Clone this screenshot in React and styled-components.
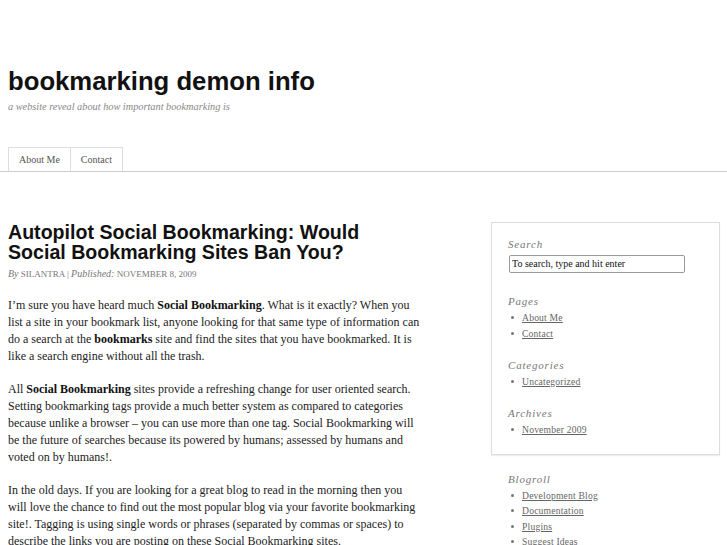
import React from 'react';
import styled, { createGlobalStyle } from 'styled-components';

const GlobalStyle = createGlobalStyle`
	html, body {
		margin: 0;
		padding: 0;
		background: #fff;
	}
	body {
		font-family: "Liberation Serif", "Times New Roman", serif;
		color: #222;
	}
`;

const Header = styled.header`
	padding: 66px 8px 0;
`;

const SiteTitle = styled.h1`
	margin: 0;
	font-family: "Liberation Sans", Arial, sans-serif;
	font-size: 25.7px;
	font-weight: bold;
	line-height: 30px;
	color: #111;
`;

const Tagline = styled.div`
	margin-top: 5px;
	font-size: 10.3px;
	font-style: italic;
	color: #888;
`;

const Nav = styled.nav`
	display: flex;
	margin-top: 35px;
	padding: 0 8px;
	border-bottom: 1px solid #ccc;
`;

const Tab = styled.a`
	display: block;
	height: 23px;
	padding: 0 10px;
	border: 1px solid #ddd;
	border-bottom: none;
	border-left-width: ${({ first }) => (first ? '1px' : '0')};
	font-size: 10px;
	line-height: 24px;
	color: #555;
	text-decoration: none;
`;

const Layout = styled.div`
	display: flex;
	align-items: flex-start;
	padding: 50px 8px 0;
	gap: 71px;
`;

const Content = styled.main`
	width: 412px;
	flex-shrink: 0;
`;

const PostTitle = styled.h2`
	margin: 0;
	font-family: "Liberation Sans", Arial, sans-serif;
	font-size: 19.6px;
	font-weight: bold;
	line-height: 20px;
	color: #111;
`;

const Meta = styled.div`
	margin-top: 6px;
	font-size: 9px;
	color: #777;
	em {
		font-style: italic;
		font-size: 10px;
	}
`;

const Body = styled.div`
	margin-top: 18px;
	font-size: 12px;
	line-height: 17px;
	color: #222;
	p {
		margin: 0 0 16px;
	}
	strong {
		font-weight: bold;
		color: #111;
	}
`;

const Sidebar = styled.aside`
	width: 229px;
	flex-shrink: 0;
`;

const Box = styled.div`
	border: 1px solid #ddd;
	box-shadow: 0 1px 1px #eee;
	padding: 15px 16px 16px;
`;

const Widget = styled.section`
	margin-bottom: ${({ gap }) => gap || '17px'};
`;

const WidgetTitle = styled.h3`
	margin: 0 0 3px;
	font-size: 11px;
	font-weight: normal;
	font-style: italic;
	letter-spacing: 0.8px;
	color: #777;
`;

const SearchInput = styled.input`
	box-sizing: border-box;
	width: 176px;
	height: 18px;
	margin-left: 1px;
	padding: 0 2px;
	border: 1px solid #999;
	border-radius: 2px;
	font-family: "Liberation Serif", "Times New Roman", serif;
	font-size: 10px;
	color: #111;
	background: #fff;
`;

const List = styled.ul`
	margin: 0;
	padding: 0 0 0 14px;
	list-style: none;
`;

const Item = styled.li`
	position: relative;
	font-size: 9.6px;
	line-height: ${({ tight }) => (tight ? '15.5px' : '16px')};
	letter-spacing: 0.2px;
	&::before {
		content: '';
		position: absolute;
		left: -11px;
		top: 6px;
		width: 3px;
		height: 3px;
		border-radius: 50%;
		background: #777;
	}
	a {
		color: #666;
		text-decoration: underline;
	}
`;

const Blogroll = styled.div`
	padding: 18px 17px 0;
`;

const WidgetList = ({ items, tight }) => (
	<List>
		{items.map((item) => (
			<Item key={item} tight={tight}>
				<a href="#">{item}</a>
			</Item>
		))}
	</List>
);

export default function App() {
	return (
		<>
			<GlobalStyle />
			<Header>
				<SiteTitle>bookmarking demon info</SiteTitle>
				<Tagline>a website reveal about how important bookmarking is</Tagline>
			</Header>
			<Nav>
				<Tab first href="#">About Me</Tab>
				<Tab href="#">Contact</Tab>
			</Nav>
			<Layout>
				<Content>
					<PostTitle>Autopilot Social Bookmarking: Would Social Bookmarking Sites Ban You?</PostTitle>
					<Meta>
						<em>By</em> SILANTRA | <em>Published:</em> NOVEMBER 8, 2009
					</Meta>
					<Body>
						<p>
							I’m sure you have heard much <strong>Social Bookmarking</strong>. What is it exactly? When you
							list a site in your bookmark list, anyone looking for that same type of information can do a
							search at the <strong>bookmarks</strong> site and find the sites that you have bookmarked. It is
							like a search engine without all the trash.
						</p>
						<p>
							All <strong>Social Bookmarking</strong> sites provide a refreshing change for user oriented
							search. Setting bookmarking tags provide a much better system as compared to categories because
							unlike a browser – you can use more than one tag. Social Bookmarking will be the future of
							searches because its powered by humans; assessed by humans and voted on by humans!.
						</p>
						<p>
							In the old days. If you are looking for a great blog to read in the morning then you will love
							the chance to find out the most popular blog via your favorite bookmarking site!. Tagging is
							using single words or phrases (separated by commas or spaces) to describe the links you are
							posting on these Social Bookmarking sites.
						</p>
					</Body>
				</Content>
				<Sidebar>
					<Box>
						<Widget gap="22px">
							<WidgetTitle>Search</WidgetTitle>
							<SearchInput defaultValue="To search, type and hit enter" />
						</Widget>
						<Widget>
							<WidgetTitle>Pages</WidgetTitle>
							<WidgetList items={['About Me', 'Contact']} />
						</Widget>
						<Widget>
							<WidgetTitle>Categories</WidgetTitle>
							<WidgetList items={['Uncategorized']} />
						</Widget>
						<Widget gap="0">
							<WidgetTitle>Archives</WidgetTitle>
							<WidgetList items={['November 2009']} />
						</Widget>
					</Box>
					<Blogroll>
						<WidgetTitle>Blogroll</WidgetTitle>
						<WidgetList tight items={['Development Blog', 'Documentation', 'Plugins', 'Suggest Ideas']} />
					</Blogroll>
				</Sidebar>
			</Layout>
		</>
	);
}
